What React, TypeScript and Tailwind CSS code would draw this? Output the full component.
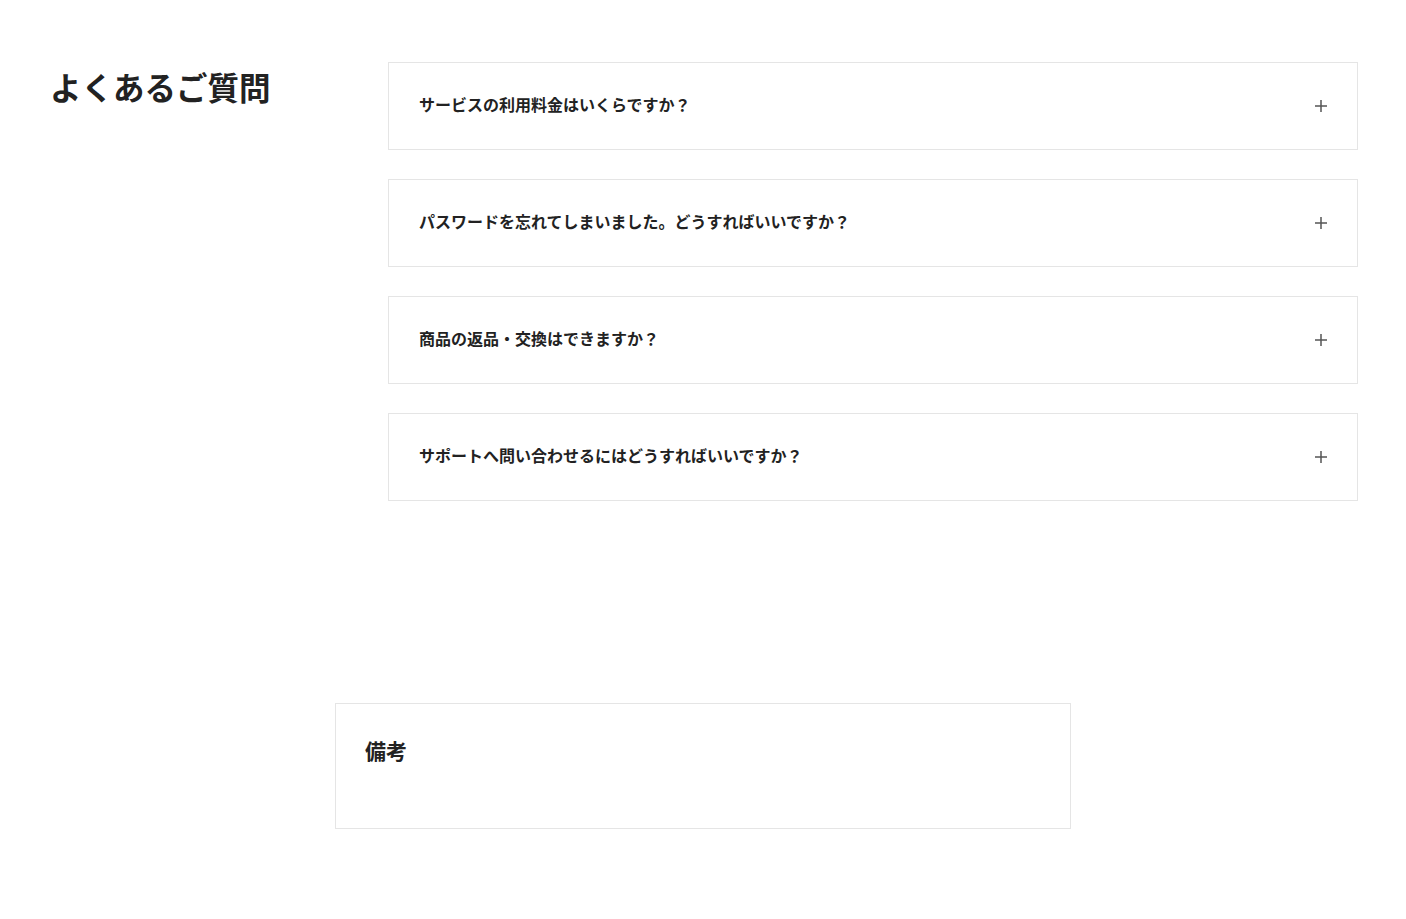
import React from "react";

const faqs = [
  "サービスの利用料金はいくらですか？",
  "パスワードを忘れてしまいました。どうすればいいですか？",
  "商品の返品・交換はできますか？",
  "サポートへ問い合わせるにはどうすればいいですか？",
];

function Plus() {
  return (
    <svg width="14" height="14" viewBox="0 0 14 14" className="shrink-0">
      <path d="M7 1v12M1 7h12" stroke="#555" strokeWidth="1.5" fill="none" />
    </svg>
  );
}

export default function App() {
  return (
    <div
      className="min-h-[919px] bg-white text-[#222]"
      style={{ fontFamily: '"Noto Sans CJK JP", "Noto Sans", sans-serif' }}
    >
      <div className="flex px-[48px] pt-[62px]">
        <h2 className="w-[340px] shrink-0 pl-[2px] text-[31.5px] font-bold leading-[48px]">
          よくあるご質問
        </h2>
        <div className="flex flex-1 flex-col gap-[29px]">
          {faqs.map((q) => (
            <div
              key={q}
              className="flex h-[88px] items-center justify-between border border-[#e5e5e5] pl-[30px] pr-[29px]"
            >
              <span className="pb-[4px] text-[16px] font-bold leading-[24px]">{q}</span>
              <Plus />
            </div>
          ))}
        </div>
      </div>
      <div className="mt-[202px] flex justify-center">
        <div className="h-[126px] w-[736px] border border-[#e5e5e5] px-[29px] pt-[31px]">
          <h3 className="text-[21px] font-bold leading-[30px]">備考</h3>
        </div>
      </div>
    </div>
  );
}
